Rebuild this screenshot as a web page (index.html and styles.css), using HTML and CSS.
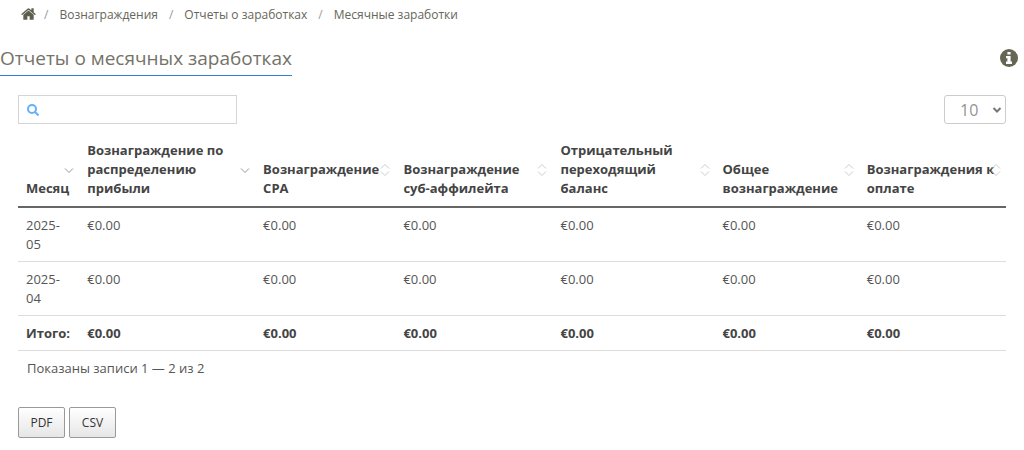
FILE: index.html
```html
<!DOCTYPE html>
<html lang="ru">
<head>
<meta charset="utf-8">
<title>Отчеты о месячных заработках</title>
<link rel="stylesheet" href="styles.css">
</head>
<body>
<svg class="defs" aria-hidden="true">
  <symbol id="sort-both" viewBox="0 0 10 14"><path d="M1 5.500 5 1.500 9 5.500M1 8.500 5 12.500 9 8.500"/></symbol>
  <symbol id="sort-down" viewBox="0 0 10 14"><path d="M1 5.500 5 9.500 9 5.500"/></symbol>
</svg>
<nav class="breadcrumb" aria-label="Навигация">
  <a class="home" href="#" aria-label="Главная"><svg class="home-icon" viewBox="0 240 1664 1300"><path d="M1408 992v480q0 26-19 45t-45 19h-384v-384h-256v384h-384q-26 0-45-19t-19-45v-480q0-1 .5-3t.5-3l575-474 575 474q1 2 1 6zm223-69l-62 74q-8 9-21 11h-3q-13 0-21-7l-692-577-692 577q-12 8-24 7-13-2-21-11l-62-74q-8-10-7-23.500t11-21.500l719-599q32-26 76-26t76 26l244 204v-195q0-14 9-23t23-9h192q14 0 23 9t9 23v408l219 182q10 8 11 21.500t-7 23.500z"/></svg></a>
  <a class="crumb" href="#">Вознаграждения</a>
  <a class="crumb" href="#">Отчеты о заработках</a>
  <a class="crumb" href="#">Месячные заработки</a>
</nav>
<header class="page-head">
  <h1 class="title">Отчеты о месячных заработках</h1>
  <a class="info" href="#" aria-label="Информация"><svg class="info-icon" viewBox="0 0 18 18"><circle cx="9" cy="9" r="9"/><path d="M7.400 3h3.200v2.600H7.400zM6 7h4.600v5.600H12V15H6v-2.400h1.400V9.300H6z"/></svg></a>
</header>
<main class="report">
  <div class="toolbar">
    <label class="search">
      <svg class="search-icon" viewBox="0 0 12 12"><circle cx="5" cy="5" r="4"/><path d="m8 8 3.500 3.500"/></svg>
      <input class="search-input" type="text" aria-label="Поиск">
    </label>
    <div class="length">
      <select class="length-select" aria-label="Записей на странице"><option>10</option><option>25</option><option>50</option></select>
      <svg class="chevron" viewBox="0 0 10 8"><path d="m1.500 2 3.500 3.500L8.500 2"/></svg>
    </div>
  </div>
  <table class="table">
    <colgroup><col class="c-month"><col class="c-share"><col class="c-cpa"><col class="c-sub"><col class="c-neg"><col class="c-total"><col class="c-pay"></colgroup>
    <thead>
      <tr>
        <th>Месяц<svg class="sort active"><use href="#sort-down"/></svg></th>
        <th>Вознаграждение по распределению прибыли<svg class="sort active"><use href="#sort-down"/></svg></th>
        <th>Вознаграждение CPA<svg class="sort"><use href="#sort-both"/></svg></th>
        <th>Вознаграждение суб-аффилейта<svg class="sort"><use href="#sort-both"/></svg></th>
        <th class="h-neg">Отрицательный переходящий баланс<svg class="sort"><use href="#sort-both"/></svg></th>
        <th>Общее вознаграждение<svg class="sort"><use href="#sort-both"/></svg></th>
        <th>Вознаграждения к оплате<svg class="sort"><use href="#sort-both"/></svg></th>
      </tr>
    </thead>
    <tbody>
      <tr><td>2025-05</td><td>€0.00</td><td>€0.00</td><td>€0.00</td><td>€0.00</td><td>€0.00</td><td>€0.00</td></tr>
      <tr><td>2025-04</td><td>€0.00</td><td>€0.00</td><td>€0.00</td><td>€0.00</td><td>€0.00</td><td>€0.00</td></tr>
    </tbody>
    <tfoot>
      <tr><td>Итого:</td><td>€0.00</td><td>€0.00</td><td>€0.00</td><td>€0.00</td><td>€0.00</td><td>€0.00</td></tr>
    </tfoot>
  </table>
  <p class="summary">Показаны записи 1 — 2 из 2</p>
  <div class="actions">
    <button class="btn" type="button">PDF</button>
    <button class="btn" type="button">CSV</button>
  </div>
</main>
</body>
</html>
```
FILE: styles.css
```css
* { box-sizing: border-box; }
body {
  margin: 0;
  background: #fff;
  color: #555;
  font: 13px/19px "Open Sans", "Noto Sans", sans-serif;
}
.defs { position: absolute; width: 0; height: 0; }
svg { display: block; }
.breadcrumb {
  display: flex;
  align-items: center;
  padding: 5px 21px 0;
  font-size: 12px;
}
.breadcrumb a { color: #66665a; text-decoration: none; }
.home-icon { width: 15px; height: 12px; margin-bottom: 2px; fill: #5f5f50; }
.crumb::before { content: "/"; padding: 0 11px 0 8px; color: #999; }
.crumb + .crumb { margin-left: 3px; }
.page-head {
  display: flex;
  justify-content: space-between;
  align-items: center;
  padding: 18px 6px 0 0;
}
.title {
  margin: 0;
  padding: 3px 0;
  border-bottom: 1px solid #2f7ed8;
  color: #737368;
  font-size: 19px;
  line-height: 27px;
  font-weight: 400;
}
.info-icon { width: 18px; height: 18px; margin-bottom: 2px; fill: #666655; }
.info-icon path { fill: #fff; }
.report { padding: 19px 18px 0; }
.toolbar { display: flex; justify-content: space-between; }
.search {
  display: flex;
  align-items: center;
  width: 219px;
  height: 29px;
  padding: 0 8px;
  border: 1px solid #d5d5d5;
}
.search-icon { flex: none; width: 12px; height: 12px; fill: none; stroke: #62b1fa; stroke-width: 2; }
.search-input {
  flex: 1;
  min-width: 0;
  padding: 0 6px;
  border: 0;
  outline: 0;
  background: none;
  font: inherit;
}
.length { position: relative; }
.length-select {
  appearance: none;
  width: 62px;
  height: 29px;
  padding: 0 16px 0 15px;
  border: 1px solid #ccc;
  border-radius: 3px;
  background: #fff;
  color: #939393;
  font: 16px/22px "Open Sans", "Noto Sans", sans-serif;
}
.chevron {
  position: absolute;
  top: 11px;
  right: 4px;
  width: 10px;
  height: 8px;
  fill: none;
  stroke: #777;
  stroke-width: 2;
  pointer-events: none;
}
.table {
  width: 100%;
  margin-top: 9px;
  border-collapse: separate;
  border-spacing: 0;
  table-layout: fixed;
  border-bottom: 1px solid #ddd;
}
.c-month { width: 6.200%; }
.c-share { width: 17.800%; }
.c-cpa { width: 14.200%; }
.c-sub { width: 15.900%; }
.c-neg { width: 16.400%; }
.c-total { width: 14.600%; }
.c-pay { width: 14.900%; }
th, td { padding: 8px 8px 7px; text-align: left; }
th {
  position: relative;
  padding-bottom: 8px;
  border-bottom: 2px solid #666;
  color: #444;
  vertical-align: bottom;
}
.h-neg { padding-right: 18px; }
td { vertical-align: top; }
td:first-child { padding-right: 4px; }
tbody td:first-child { padding-right: 16px; }
tbody tr + tr td, tfoot td { border-top: 1px solid #ddd; }
tfoot td { color: #444; font-weight: 700; }
.sort {
  position: absolute;
  top: calc(50% - 7px);
  right: 5px;
  width: 10px;
  height: 14px;
  fill: none;
  stroke: #ccc;
}
.sort.active { stroke: #999; }
.summary { margin: 0; padding: 8px 9px 0; }
.actions { display: flex; gap: 4px; margin-top: 29px; }
.btn {
  min-width: 47px;
  height: 31px;
  padding: 0 8px;
  border: 1px solid #999;
  border-radius: 2px;
  background: linear-gradient(#fff, #e6e6e6);
  color: #333;
  font: 12px/19px "Open Sans", "Noto Sans", sans-serif;
}
```
